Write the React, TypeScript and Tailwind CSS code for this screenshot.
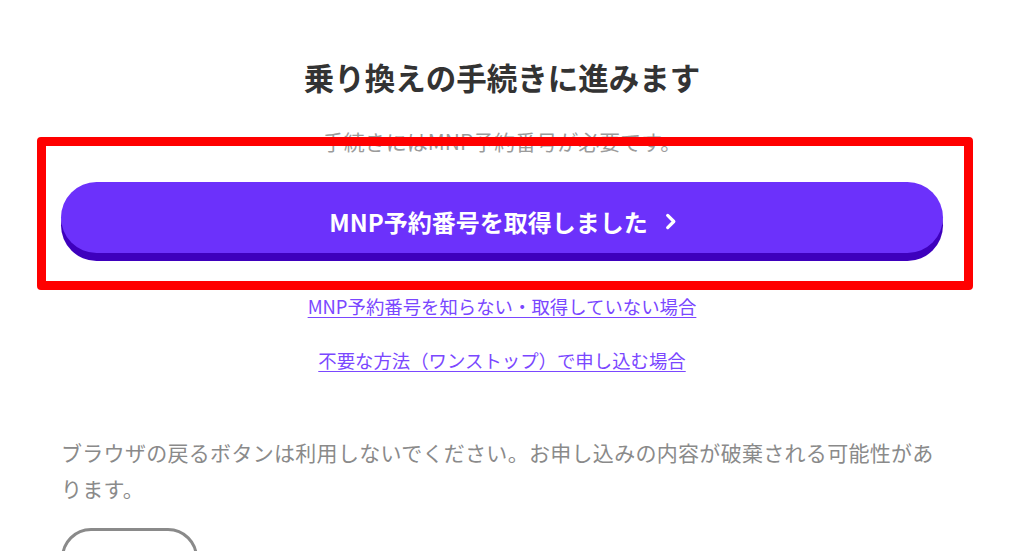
const font = "font-['Noto_Sans_CJK_JP','Noto_Sans',sans-serif]";

function Chevron() {
  return (
    <svg viewBox="0 0 12 18" className="h-[17px] w-[12px]" fill="none">
      <path d="M2.5 2.5L9 9l-6.5 6.5" stroke="#fff" strokeWidth="3.4" strokeLinecap="round" strokeLinejoin="round" />
    </svg>
  );
}

export default function App() {
  return (
    <div className={`relative min-h-[551px] w-[1024px] overflow-hidden bg-white ${font}`}>
      <main className="ml-[61px] flex w-[882px] flex-col items-center pt-[55px]">
        <h1 className="text-[30.5px] leading-[45px] font-bold text-[#333333]">乗り換えの手続きに進みます</h1>
        <p className="mt-[26px] text-[21px] leading-[30px] text-[#9b9b9b]">手続きにはMNP予約番号が必要です。</p>

        <button
          type="button"
          className="mt-[26px] flex h-[71px] w-full items-center justify-center gap-[17px] rounded-full bg-[#6c31fb] pt-[8px] pl-[2px] text-[24px] font-bold text-white shadow-[0_8px_0_#3e00bd]"
        >
          <span>MNP予約番号を取得しました</span>
          <Chevron />
        </button>

        <a href="#" className="mt-[40px] text-[18.4px] leading-[27px] text-[#7a47ff] underline underline-offset-[3px]">
          MNP予約番号を知らない・取得していない場合
        </a>
        <a href="#" className="mt-[27px] text-[18.4px] leading-[27px] text-[#7a47ff] underline underline-offset-[3px]">
          不要な方法（ワンストップ）で申し込む場合
        </a>

        <p className="mt-[60px] w-[876px] self-start text-[21px] leading-[36px] tracking-[0.3px] text-[#8a8a8a]">
          ブラウザの戻るボタンは利用しないでください。お申し込みの内容が破棄される可能性があります。
        </p>

        <div className="mt-[22px] h-[60px] w-[137px] self-start rounded-[34px] border-[3px] border-[#8a8a8a]" />
      </main>

      <div className="pointer-events-none absolute top-[137px] left-[37px] h-[153px] w-[936px] rounded-[4px] border-[9px] border-[#ff0000]" />
    </div>
  );
}
